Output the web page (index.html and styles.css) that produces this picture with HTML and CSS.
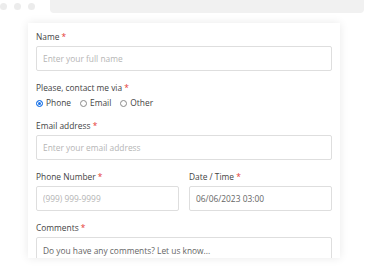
FILE: index.html
```html
<!DOCTYPE html>
<html>
<head>
<meta charset="utf-8">
<link rel="stylesheet" href="styles.css">
</head>
<body>
<div class="topbar">
  <div class="dots"><span class="dot"></span><span class="dot"></span><span class="dot"></span></div>
  <div class="address"></div>
</div>
<div class="card">
  <div class="group">
    <div class="label">Name <span class="req">*</span></div>
    <input class="field" type="text" placeholder="Enter your full name">
  </div>
  <div class="group">
    <div class="label">Please, contact me via <span class="req">*</span></div>
    <div class="radios">
      <span class="radio"><span class="circle checked"></span>Phone</span>
      <span class="radio"><span class="circle"></span>Email</span>
      <span class="radio"><span class="circle"></span>Other</span>
    </div>
  </div>
  <div class="group">
    <div class="label">Email address <span class="req">*</span></div>
    <input class="field" type="text" placeholder="Enter your email address">
  </div>
  <div class="group row">
    <div class="col">
      <div class="label">Phone Number <span class="req">*</span></div>
      <input class="field" type="text" placeholder="(999) 999-9999">
    </div>
    <div class="col">
      <div class="label">Date / Time <span class="req">*</span></div>
      <input class="field value" type="text" value="06/06/2023 03:00">
    </div>
  </div>
  <div class="group">
    <div class="label">Comments <span class="req">*</span></div>
    <textarea class="field area" placeholder="Do you have any comments? Let us know..."></textarea>
  </div>
</div>
</body>
</html>
```
FILE: styles.css
```css
html, body {
  margin: 0;
  padding: 0;
  background: #fff;
  width: 368px;
  height: 270px;
  overflow: hidden;
  font-family: "Open Sans", "Liberation Sans", sans-serif;
  font-size: 8.4px;
  color: #444;
}
.topbar {
  display: flex;
  align-items: flex-start;
  height: 13px;
}
.dots {
  display: flex;
  gap: 7px;
  padding-top: 3px;
}
.dot {
  width: 7px;
  height: 7px;
  border-radius: 50%;
  background: #ececec;
}
.address {
  flex: 1;
  height: 13px;
  margin-left: 15px;
  margin-right: 4px;
  background: #f1f1f1;
  border-radius: 0 0 4px 4px;
}
.card {
  box-sizing: border-box;
  margin: 10px 0 0 28px;
  width: 312px;
  height: 235px;
  padding: 8px 8px 0;
  background: #fff;
  box-shadow: 0 0 9px rgba(0, 0, 0, 0.09);
  overflow: hidden;
}
.group {
  margin-bottom: 11px;
}
.label {
  line-height: 12px;
  margin-bottom: 3px;
  color: #444;
  white-space: nowrap;
}
.req {
  color: #e53935;
}
.field {
  display: block;
  box-sizing: border-box;
  width: 100%;
  height: 25px;
  margin: 0;
  padding: 0 6px;
  border: 1px solid #dedede;
  border-radius: 2px;
  background: #fff;
  font-family: "Open Sans", "Liberation Sans", sans-serif;
  font-size: 8.4px;
  color: #666;
  outline: none;
}
.field::placeholder {
  color: #b5b5b5;
}
.value {
  color: #666;
}
.area {
  height: 60px;
  padding-top: 7px;
  resize: none;
}
.area::placeholder {
  color: #666;
}
.row {
  display: grid;
  grid-template-columns: 1fr 1fr;
  column-gap: 10px;
}
.radios {
  display: flex;
  gap: 9px;
  margin-top: 3px;
  line-height: 12px;
}
.radio {
  display: flex;
  align-items: center;
  gap: 3px;
  color: #444;
}
.circle {
  box-sizing: border-box;
  width: 7px;
  height: 7px;
  border-radius: 50%;
  border: 1px solid #8a8a8a;
  background: #fff;
}
.circle.checked {
  border-color: #1a73e8;
  background: #1a73e8;
  box-shadow: inset 0 0 0 1px #fff;
}
```
